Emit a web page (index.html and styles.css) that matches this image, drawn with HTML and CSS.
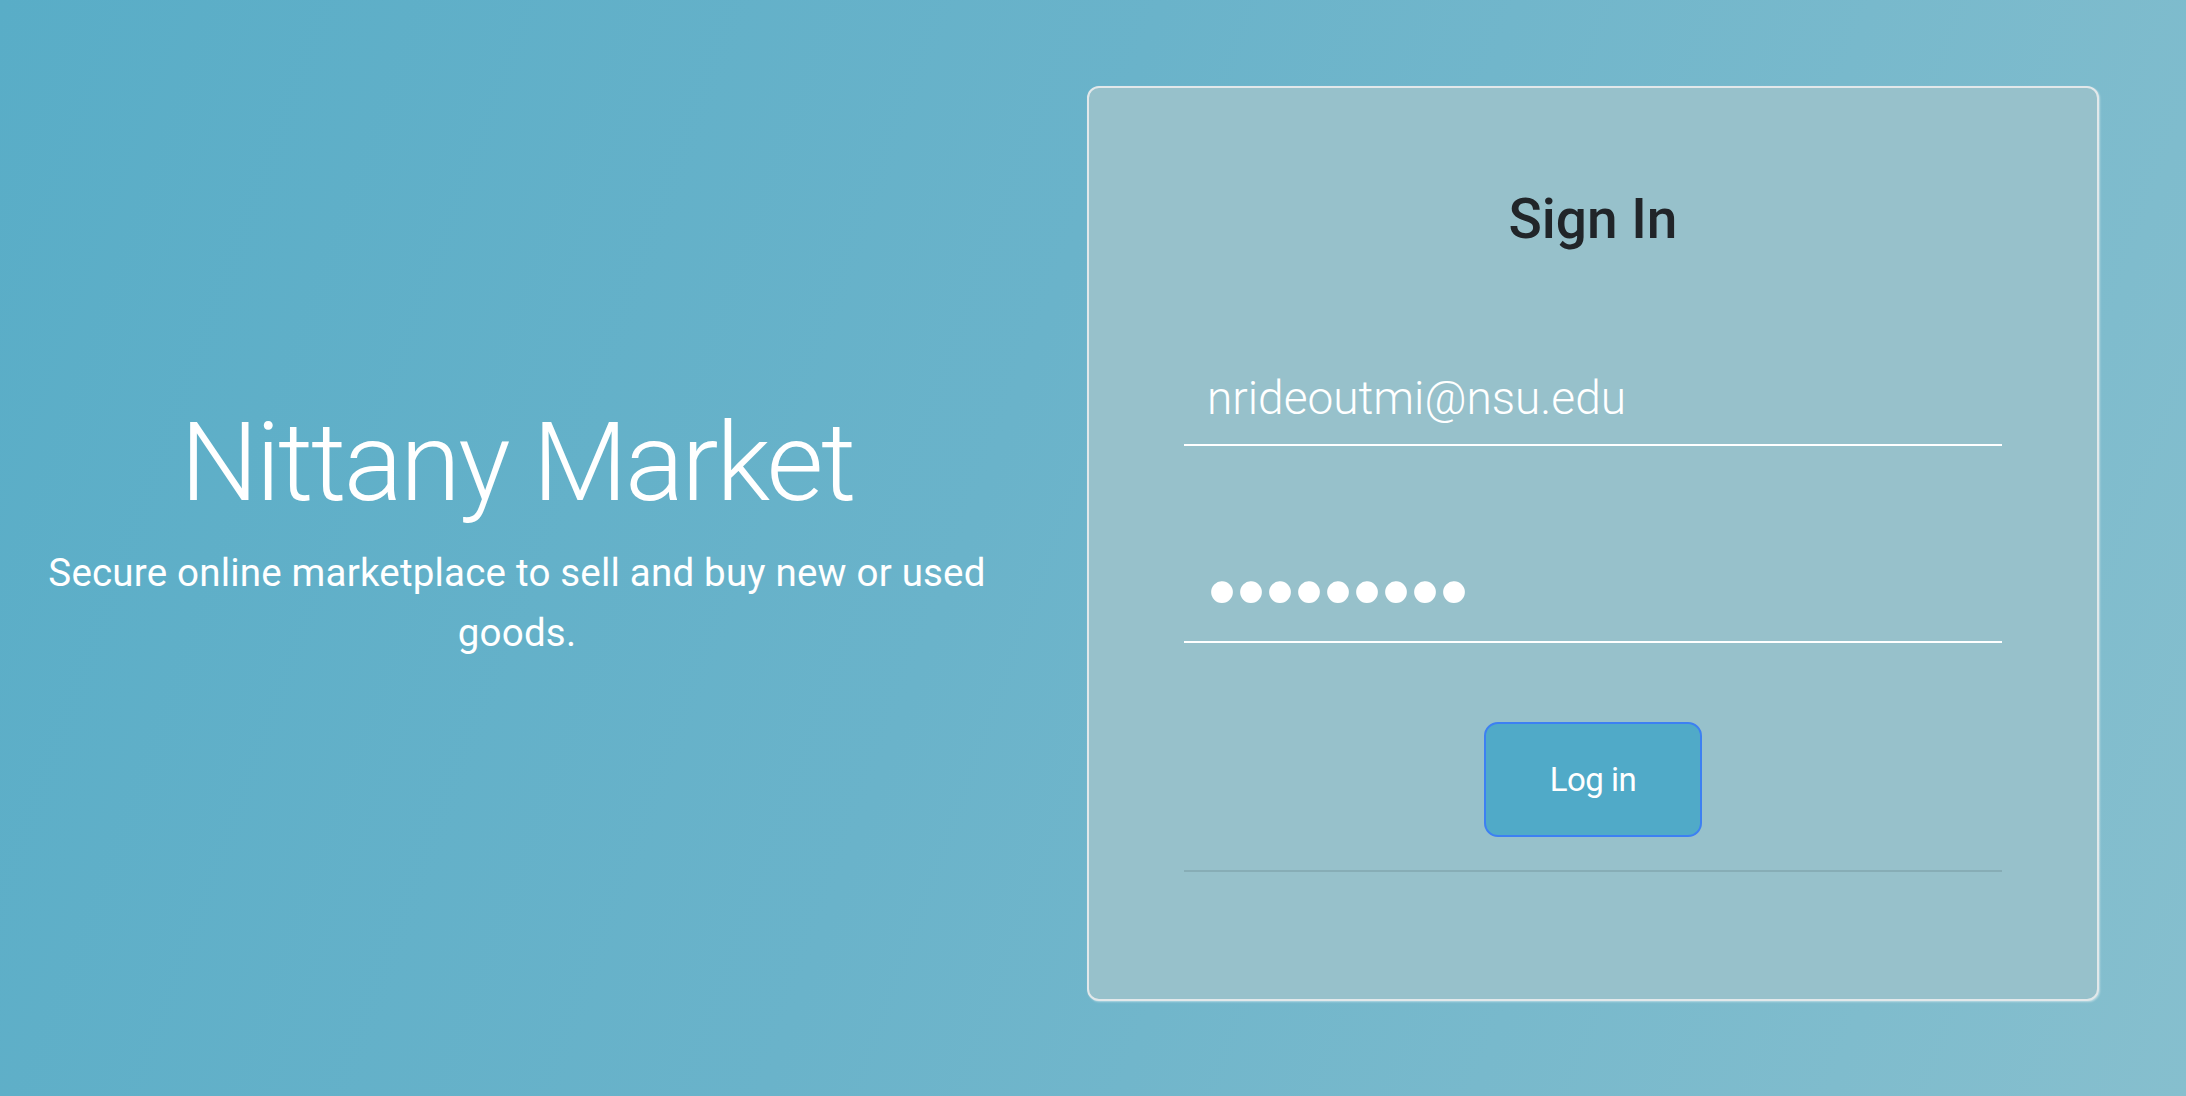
FILE: index.html
```html
<!DOCTYPE html>
<html lang="en">
<head>
<meta charset="utf-8">
<title>Nittany Market – Sign In</title>
<link rel="stylesheet" href="styles.css">
</head>
<body>
<main class="page">
  <section class="intro">
    <h1 class="brand">Nittany Market</h1>
    <p class="tagline">Secure online marketplace to sell and buy new or used goods.</p>
  </section>
  <section class="login-col">
    <form class="card">
      <h2 class="card-title">Sign In</h2>
      <input class="field" type="email" value="nrideoutmi@nsu.edu" aria-label="Email">
      <input class="field field-password" type="password" value="123456789" aria-label="Password">
      <button class="btn-login" type="button">Log in</button>
      <hr class="divider">
    </form>
  </section>
</main>
</body>
</html>
```
FILE: styles.css
```css
html, body {
  margin: 0;
  height: 100%;
}

body {
  font-family: Roboto, "Liberation Sans", sans-serif;
  background: linear-gradient(110deg, #59adc7 0%, #6ab3ca 45%, #86bfce 100%);
  color: #fff;
  overflow: hidden;
}

.page {
  display: flex;
  align-items: flex-start;
  height: 1096px;
  box-sizing: border-box;
  padding: 86px 87px 0 0;
}

.intro {
  width: 1034px;
  flex: 0 0 1034px;
  box-sizing: border-box;
  padding: 311px 30px 0;
  text-align: center;
}

.brand {
  margin: 0;
  font-size: 110px;
  font-weight: 300;
  line-height: 132px;
  letter-spacing: -2.5px;
}

.tagline {
  margin: 14px 0 0;
  font-size: 38.5px;
  font-weight: 400;
  line-height: 60px;
  letter-spacing: 0.2px;
}

.login-col {
  flex: 1 1 auto;
  display: flex;
  justify-content: flex-end;
}

.card {
  width: 1012px;
  box-sizing: border-box;
  display: flex;
  flex-direction: column;
  padding: 99px 95px 127px;
  background: #97c1cb;
  border: 2px solid #e2e8ea;
  border-radius: 12px;
  box-shadow: 1px 1px 2px rgba(255, 255, 255, 0.45);
}

.card-title {
  margin: 0;
  text-align: center;
  font-size: 55px;
  font-weight: 500;
  line-height: 64px;
  color: #212529;
}

.field {
  display: block;
  width: 100%;
  height: 95px;
  box-sizing: border-box;
  margin: 100px 0 0;
  padding: 0 20px 0 23px;
  border: 0;
  border-bottom: 2px solid #fff;
  border-radius: 0;
  background: transparent;
  color: #fff;
  font-family: Roboto, "Liberation Sans", sans-serif;
  font-size: 46px;
  font-weight: 300;
  letter-spacing: 0;
  outline: none;
}

.field-password {
  margin-top: 102px;
  padding: 0 20px 6px 24px;
  font-family: "Liberation Sans", sans-serif;
  font-size: 80px;
  letter-spacing: 1px;
}

.btn-login {
  align-self: center;
  width: 218px;
  height: 115px;
  margin-top: 79px;
  box-sizing: border-box;
  border: 2px solid #3d80f2;
  border-radius: 14px;
  background: #50aac8;
  color: #fff;
  font-family: Roboto, "Liberation Sans", sans-serif;
  font-size: 33px;
  font-weight: 400;
  letter-spacing: -0.5px;
  cursor: pointer;
}

.divider {
  width: 100%;
  margin: 33px 0 0;
  border: 0;
  border-top: 2px solid rgba(0, 0, 0, 0.1);
}
```
